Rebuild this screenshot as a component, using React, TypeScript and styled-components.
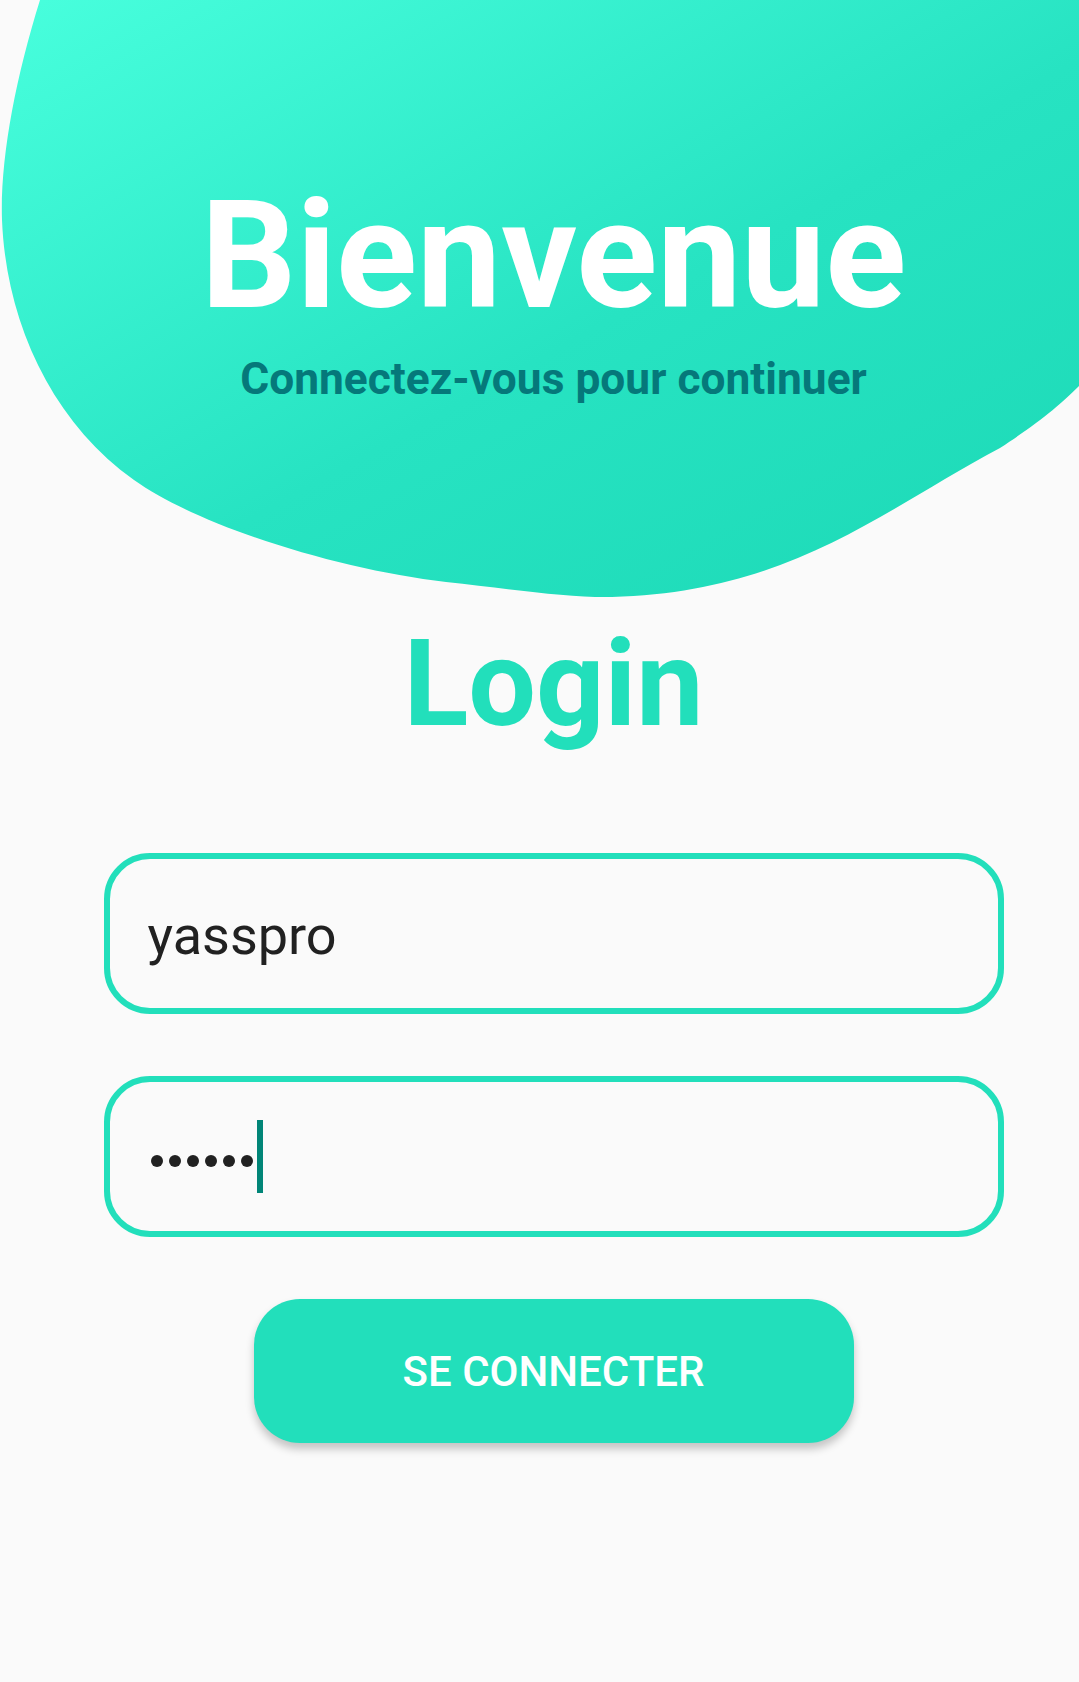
import React from "react";
import styled, { createGlobalStyle } from "styled-components";

const GlobalStyle = createGlobalStyle`
  html, body {
    margin: 0;
    padding: 0;
    background: #fafafa;
  }
  body {
    font-family: Roboto, "Noto Sans", "Liberation Sans", sans-serif;
  }
`;

const Screen = styled.div`
  width: 1079px;
  min-height: 1682px;
  background: #fafafa;
  overflow: hidden;
  display: flex;
  flex-direction: column;
`;

const Header = styled.header`
  position: relative;
  height: 600px;
  display: flex;
  flex-direction: column;
  align-items: center;
  padding: 181px 0 0 28px;
  box-sizing: border-box;
`;

const Blob = styled.svg`
  position: absolute;
  left: 0;
  top: 0;
  width: 1079px;
  height: 600px;
  z-index: 0;
`;

const Title = styled.h1`
  position: relative;
  z-index: 1;
  margin: 0;
  font-family: Roboto, sans-serif;
  font-weight: 700;
  font-size: 150px;
  line-height: 150px;
  color: #ffffff;
`;

const Subtitle = styled.p`
  position: relative;
  z-index: 1;
  margin: 26px 0 0;
  font-family: Roboto, sans-serif;
  font-weight: 700;
  font-size: 44.3px;
  line-height: 44px;
  color: #05787a;
`;

const Body = styled.main`
  display: flex;
  flex-direction: column;
  align-items: center;
  padding: 24px 0 0 28px;
`;

const LoginTitle = styled.h2`
  margin: 0;
  font-family: Roboto, sans-serif;
  font-weight: 700;
  font-size: 120px;
  line-height: 120px;
  color: #22dfbb;
`;

const Form = styled.form`
  display: flex;
  flex-direction: column;
  align-items: center;
  gap: 62px;
  margin-top: 109px;
`;

const Field = styled.div`
  width: 900px;
  height: 161px;
  box-sizing: border-box;
  border: 6px solid #22dfbb;
  border-radius: 46px;
  padding: 4px 0 0 38px;
  display: flex;
  align-items: center;
`;

const Value = styled.span`
  font-family: Roboto, sans-serif;
  font-size: 54px;
  color: #212121;
`;

const Dots = styled.span`
  display: flex;
  gap: 6px;
  align-items: center;
  margin-top: 8px;
`;

const Dot = styled.span`
  width: 12px;
  height: 12px;
  border-radius: 50%;
  background: #212121;
`;

const PassRow = styled.div`
  display: flex;
  align-items: center;
  margin-left: 3px;
  margin-top: -4px;
`;

const Caret = styled.span`
  width: 6px;
  height: 73px;
  margin-left: 4px;
  background: #008577;
`;

const Button = styled.button`
  width: 600px;
  height: 144px;
  border: none;
  border-radius: 46px;
  background: #22dfbb;
  color: #ffffff;
  font-family: Roboto, sans-serif;
  font-weight: 500;
  font-size: 42px;
  text-transform: uppercase;
  box-shadow: 0 6px 8px rgba(0, 0, 0, 0.22);
  cursor: pointer;
`;

export default function App() {
  return (
    <>
      <GlobalStyle />
      <Screen>
        <Header>
          <Blob viewBox="0 0 1079 600" preserveAspectRatio="none">
            <defs>
              <linearGradient id="blobGrad" x1="0" y1="0" x2="1" y2="1">
                <stop offset="0" stopColor="#48ffdd" />
                <stop offset="0.55" stopColor="#27e3c2" />
                <stop offset="1" stopColor="#1cd9b6" />
              </linearGradient>
            </defs>
            <path
              d="M40,0 C15,80 0,160 2,220 C6,320 50,420 134,480 C200,527 340,570 446,582 C510,589 570,598 612,597 C790,592 880,512 1000,448 C1040,422 1060,405 1079,386 L1079,0 Z"
              fill="url(#blobGrad)"
            />
          </Blob>
          <Title>Bienvenue</Title>
          <Subtitle>Connectez-vous pour continuer</Subtitle>
        </Header>
        <Body>
          <LoginTitle>Login</LoginTitle>
          <Form onSubmit={(e) => e.preventDefault()}>
            <Field>
              <Value>yasspro</Value>
            </Field>
            <Field>
              <PassRow>
                <Dots>
                  {Array.from({ length: 6 }).map((_, i) => (
                    <Dot key={i} />
                  ))}
                </Dots>
                <Caret />
              </PassRow>
            </Field>
            <Button type="submit">Se connecter</Button>
          </Form>
        </Body>
      </Screen>
    </>
  );
}
